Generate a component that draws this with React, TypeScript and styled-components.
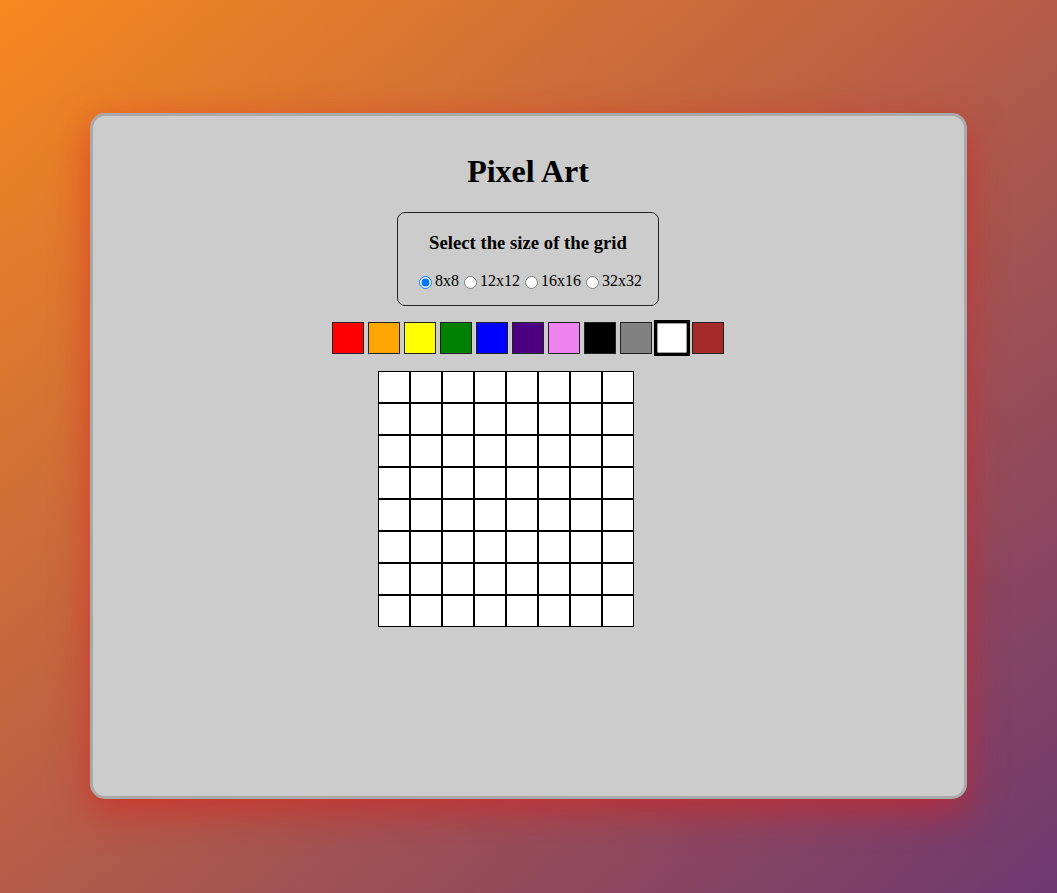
import React, { useState } from "react";
import styled, { createGlobalStyle } from "styled-components";

const Global = createGlobalStyle`
  html, body { margin: 0; padding: 0; }
  body {
    min-height: 100vh;
    background: linear-gradient(to bottom right, #f6891f 0%, #b45c48 50%, #6e3870 100%);
    font-family: "Liberation Serif", "Times New Roman", serif;
    overflow: hidden;
  }
`;

const Page = styled.div`
  padding: 113px 1px 0 0;
  height: 893px;
  box-sizing: border-box;
  display: flex;
  justify-content: center;
  align-items: flex-start;
`;

const Card = styled.main`
  box-sizing: border-box;
  width: 877px;
  height: 686px;
  border: 3px solid #a9a9a9;
  border-radius: 15px;
  background: #cccccc;
  box-shadow: 0 12px 36px rgba(220, 30, 30, 0.6);
  padding-top: 16px;
  display: flex;
  flex-direction: column;
  align-items: center;
`;

const Title = styled.h1`
  font-size: 32px;
  font-weight: bold;
  margin: 21.44px 0;
  color: #000;
`;

const SizeBox = styled.fieldset`
  margin: 0;
  border: 1px solid #222;
  border-radius: 8px;
  padding: 0 16px 15px;
  display: flex;
  flex-direction: column;
  align-items: center;
`;

const SizeHeading = styled.h3`
  font-size: 18.72px;
  font-weight: bold;
  margin: 18.72px 0;
`;

const RadioRow = styled.div`
  font-size: 16px;
  line-height: 18px;
  display: flex;
  align-items: center;
`;

const RadioLabel = styled.label`
  display: inline-flex;
  align-items: center;
  input { margin: 3px 3px 0 5px; }
`;

const Palette = styled.div`
  display: flex;
  gap: 4px;
  margin: 16px 0 17px;
`;

const Swatch = styled.button<{ $color: string; $active: boolean }>`
  box-sizing: border-box;
  width: 32px;
  height: 32px;
  padding: 0;
  background: ${(p) => p.$color};
  border: ${(p) => (p.$active ? "3px solid #000" : "1px solid #222")};
  transform: ${(p) => (p.$active ? "scale(1.125)" : "none")};
  cursor: pointer;
`;

const GridWrap = styled.div`
  width: 300px;
`;

const Grid = styled.div<{ $n: number }>`
  display: grid;
  grid-template-columns: repeat(${(p) => p.$n}, 32px);
`;

const Cell = styled.div`
  box-sizing: border-box;
  width: 32px;
  height: 32px;
  border: 1px solid #000;
  background: #fff;
`;

const colors = ["red", "orange", "yellow", "green", "blue", "indigo", "violet", "black", "gray", "white", "brown"];
const sizes = [8, 12, 16, 32];

export default function App() {
  const [size, setSize] = useState(8);
  const [color, setColor] = useState("white");
  return (
    <>
      <Global />
      <Page>
        <Card>
          <Title>Pixel Art</Title>
          <SizeBox>
            <SizeHeading>Select the size of the grid</SizeHeading>
            <RadioRow>
              {sizes.map((s) => (
                <RadioLabel key={s}>
                  <input type="radio" name="size" checked={size === s} onChange={() => setSize(s)} />
                  {s}x{s}
                </RadioLabel>
              ))}
            </RadioRow>
          </SizeBox>
          <Palette>
            {colors.map((c) => (
              <Swatch key={c} $color={c} $active={color === c} onClick={() => setColor(c)} />
            ))}
          </Palette>
          <GridWrap>
            <Grid $n={8}>
              {Array.from({ length: 64 }).map((_, i) => (
                <Cell key={i} />
              ))}
            </Grid>
          </GridWrap>
        </Card>
      </Page>
    </>
  );
}
